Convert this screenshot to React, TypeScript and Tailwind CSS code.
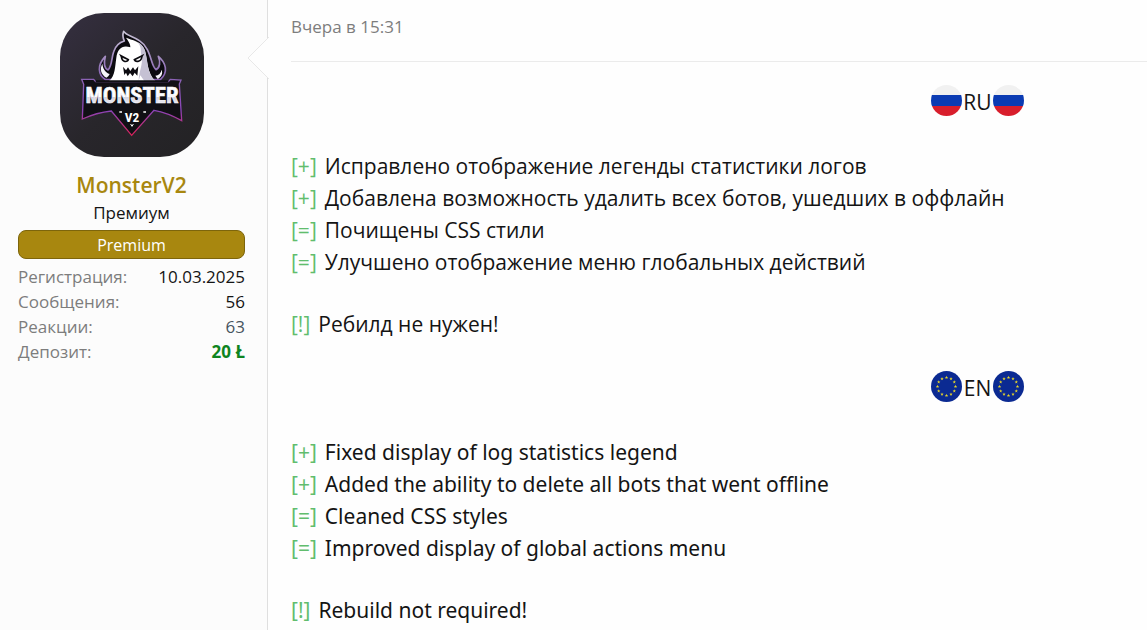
import { ReactNode } from "react"

interface Change {
    mark: string;
    text: string;
}

interface Section {
    lang: string;
    flag: ReactNode;
    font: string;
    changes: Change[];
    note: string;
}

const MonsterLogo = () => (
    <svg viewBox="27 24 432 432" className="size-36 rounded-[44px]" role="img" aria-label="MonsterV2">
      <defs>
        <linearGradient id="back" x1="0" y1="0" x2="1" y2="1">
          <stop offset="0" stopColor="#352f40"/>
          <stop offset="0.5" stopColor="#28262b"/>
          <stop offset="1" stopColor="#232224"/>
        </linearGradient>
        <linearGradient id="edge" gradientUnits="userSpaceOnUse" x1="0" y1="80" x2="0" y2="395">
          <stop offset="0" stopColor="#c9c4d6"/>
          <stop offset="0.4" stopColor="#8b68b4"/>
          <stop offset="0.75" stopColor="#8a44b8"/>
          <stop offset="1" stopColor="#e01f55"/>
        </linearGradient>
        <linearGradient id="letters" gradientUnits="userSpaceOnUse" x1="0" y1="242" x2="0" y2="300">
          <stop offset="0.6" stopColor="#ffffff"/>
          <stop offset="0.6" stopColor="#d3d2e0"/>
          <stop offset="1" stopColor="#f1f0f6"/>
        </linearGradient>
      </defs>
      <rect x="27" y="24" width="432" height="432" fill="url(#back)"/>

      {/* hood and horns */}
      <path
        d="M164 224 C140 210 138 180 163 154 C158 174 161 190 171 195 C184 180 181 160 188 140 C194 121 206 112 220 108 C215 98 214 90 218 79 C226 92 249 94 265 107 C290 123 296 150 303 172 C307 184 310 190 315 194 C327 188 329 170 322 154 C345 173 353 202 328 224 Z"
        fill="#0c0b10" stroke="url(#edge)" strokeWidth="5" strokeLinejoin="round"
      />
      <path d="M166 218 C149 208 146 191 154 176 C156 192 163 202 176 207 C173 212 171 216 166 218 Z" fill="#f6f5fa"/>
      <path d="M313 212 C323 211 330 204 332 194 C336 206 331 216 320 222 Z" fill="#f6f5fa"/>

      {/* ghost */}
      <path
        d="M174 228 C193 212 192 184 196 158 C199 131 215 118 238 127 C239 116 230 106 225 98 C241 105 272 108 282 137 C290 166 288 204 313 228 Z"
        fill="#ffffff"
      />
      <path d="M260 112 C281 121 284 142 288 165 C291 191 295 211 313 228 L280 228 L268 211 L263 228 C263 198 278 176 271 152 C268 135 272 126 260 112 Z" fill="#c5c1d3"/>
      <path d="M204 146 L235 163 C233 176 210 175 209 156 Z M280 146 L247 163 C250 177 273 174 275 155 Z" fill="#0c0b10"/>
      <path d="M214 158 L229 165 Q219 172 214 158 Z M270 157 L254 165 Q266 171 270 157 Z" fill="#ffffff"/>
      <path d="M216 185 L225 196 L231 187 L238 198 L246 187 L252 196 L262 184 L259 212 L251 203 L245 214 L237 204 L230 214 L225 203 L220 210 Z" fill="#0c0b10"/>

      {/* banner */}
      <path
        d="M92 223 L128 223 L134 230 L352 230 L358 223 L390 225 L385 237 L392 347 Q350 323 309 316 L242 391 L181 318 Q137 323 94 342 L98 238 Z"
        fill="#111015" stroke="url(#edge)" strokeWidth="4" strokeLinejoin="miter"
      />
      <path d="M134 229 H352" stroke="#111015" strokeWidth="6"/>
      <g fontFamily="'Liberation Sans Narrow', 'Roboto Condensed', 'Liberation Sans', sans-serif" fontWeight="700" textAnchor="middle">
        <text x="243" y="295" fontSize="68" fill="url(#letters)" stroke="#f4f3f8" strokeWidth="2">MONSTER</text>
        <text x="243" y="350" fontSize="40" fill="#ffffff">V2</text>
      </g>
      <path d="M205 321 h8 M277 321 h8" stroke="#ffffff" strokeWidth="4"/>
      <path d="M239 357 L243 364 L247 357" fill="none" stroke="#ffffff" strokeWidth="3"/>
    </svg>
)

const RuFlag = () => (
    <svg viewBox="0 0 31 31" className="size-[31px]" aria-hidden="true">
      <clipPath id="round"><circle cx="15.5" cy="15.5" r="15.5"/></clipPath>
      <g clipPath="url(#round)">
        <rect width="31" height="10" fill="#f1f1f1"/>
        <rect y="10" width="31" height="11" fill="#0b3bb3"/>
        <rect y="21" width="31" height="10" fill="#d81e2c"/>
      </g>
    </svg>
)

const EuFlag = () => (
    <svg viewBox="0 0 31 31" className="size-[31px]" aria-hidden="true">
      <circle cx="15.5" cy="15.5" r="15.5" fill="#0b2a92"/>
      {Array.from({ length: 12 }, (_, i) => (
          <path
            key={i}
            d="M0 -1.7 L0.5 -0.5 L1.7 -0.5 L0.7 0.3 L1.1 1.5 L0 0.8 L-1.1 1.5 L-0.7 0.3 L-1.7 -0.5 L-0.5 -0.5 Z"
            fill="#e6d52b"
            transform={`translate(${15.5 + 9 * Math.sin((i * Math.PI) / 6)} ${15.5 - 9 * Math.cos((i * Math.PI) / 6)})`}
          />
      ))}
    </svg>
)

const sections: Section[] = [
    {
        lang: "RU",
        flag: <RuFlag/>,
        font: "font-['Open_Sans',sans-serif]",
        changes: [
            { mark: "[+]", text: "Исправлено отображение легенды статистики логов" },
            { mark: "[+]", text: "Добавлена возможность удалить всех ботов, ушедших в оффлайн" },
            { mark: "[=]", text: "Почищены CSS стили" },
            { mark: "[=]", text: "Улучшено отображение меню глобальных действий" },
        ],
        note: "Ребилд не нужен!",
    },
    {
        lang: "EN",
        flag: <EuFlag/>,
        font: "font-['Noto_Sans',sans-serif]",
        changes: [
            { mark: "[+]", text: "Fixed display of log statistics legend" },
            { mark: "[+]", text: "Added the ability to delete all bots that went offline" },
            { mark: "[=]", text: "Cleaned CSS styles" },
            { mark: "[=]", text: "Improved display of global actions menu" },
        ],
        note: "Rebuild not required!",
    },
]

const stats = [
    { label: "Регистрация:", value: "10.03.2025", style: "text-[#141414]" },
    { label: "Сообщения:", value: "56", style: "text-[#141414]" },
    { label: "Реакции:", value: "63", style: "text-[#47545f]" },
    { label: "Депозит:", value: "20 Ł", style: "font-bold text-[#0e8420]" },
]

const UserPanel = () => (
    <aside className="relative w-[268px] shrink-0 border-r border-[#dfdfdf] bg-[#fcfcfc] pl-[18px] pr-[22px] pt-[13px]">
      <div className="flex flex-col items-center">
        <MonsterLogo/>
        <a href="#user" className="mt-[14px] text-[21px] leading-7 font-semibold text-[#a8870f]">MonsterV2</a>
        <div className="text-[17px] leading-7 text-[#141414]">Премиум</div>
        <div className="mt-[3px] w-full rounded-lg border border-[#7d650b] bg-[#a8870f] pt-px text-center text-base leading-[26px] text-white">
          Premium
        </div>
      </div>
      <dl className="mt-[5px] text-[17px] leading-[25px]">
        {stats.map((stat) => (
            <div key={stat.label} className="flex justify-between">
              <dt className="text-[#7d7d7d]">{stat.label}</dt>
              <dd className={stat.style}>{stat.value}</dd>
            </div>
        ))}
      </dl>
      {/* arrow that points from the message to its author */}
      <svg viewBox="0 0 22 44" className="absolute top-[36px] -right-[2px] h-[44px] w-[22px]" aria-hidden="true">
        <path d="M22 1 L1 22 L22 43 Z" fill="#fefefe"/>
        <path d="M22 1 L1 22 L22 43" fill="none" stroke="#e8e8e8"/>
      </svg>
    </aside>
)

const Line = ({mark, text}:Change) => (
    <p className="flex gap-2">
      <span className="text-[#61bd6d]">{mark}</span>
      <span>{text}</span>
    </p>
)

const App = () => {
  return (
    <div className="flex min-h-screen overflow-hidden bg-[#fefefe] font-['Open_Sans','Noto_Sans',sans-serif]">
      <UserPanel/>
      <article className="min-w-0 flex-1 pl-[23px]">
        <header className="border-b border-[#ebebeb] pt-[13px] pb-5 text-[17px] leading-7 text-[#7d7d7d]">
          <time>Вчера в 15:31</time>
        </header>
        <div className="flex flex-col gap-[31px] pt-[23px] text-[21px] leading-8 text-[#141414]">
          {sections.map((section) => (
              <section key={section.lang}>
                <h2 className="flex items-start justify-end pr-[123px]">
                  {section.flag}
                  <span className="w-[31px] text-center leading-[34px]">{section.lang}</span>
                  {section.flag}
                </h2>
                <div className={`mt-[31px] ${section.font}`}>
                  {section.changes.map((change) => (
                      <Line key={change.text} {...change}/>
                  ))}
                  <div className="mt-[30px]">
                    <Line mark="[!]" text={section.note}/>
                  </div>
                </div>
              </section>
          ))}
        </div>
      </article>
    </div>
  )
}

export default App
